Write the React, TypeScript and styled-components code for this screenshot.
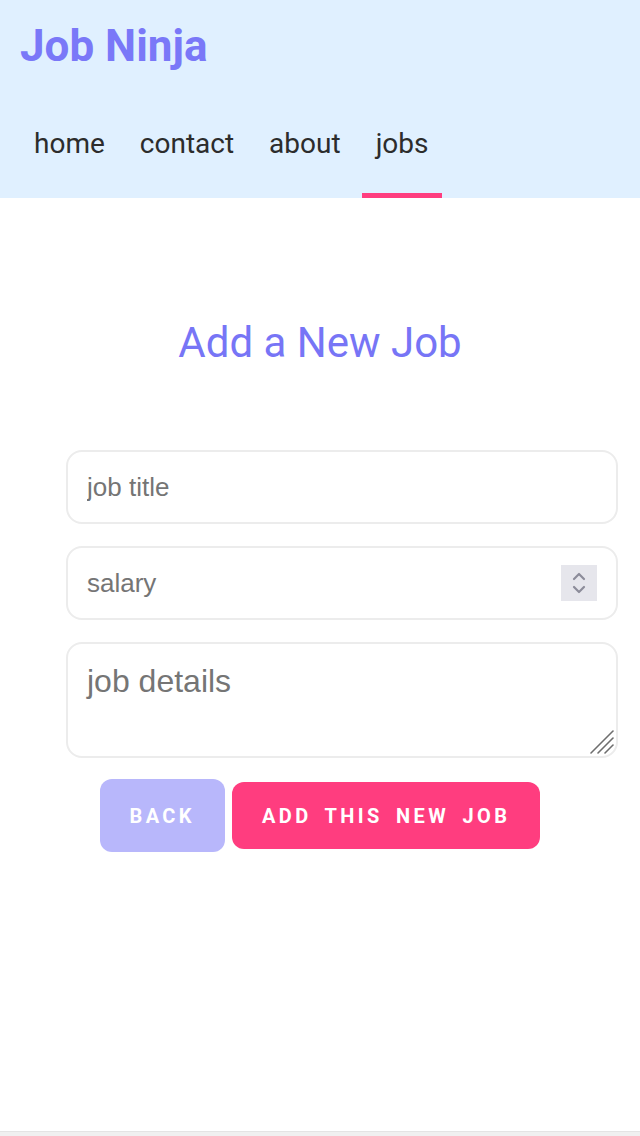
import React from 'react'
import styled, { createGlobalStyle } from 'styled-components'

const GlobalStyle = createGlobalStyle`
  html, body {
    margin: 0;
    padding: 0;
    background: #f0f0f0;
  }
  body {
    font-family: Roboto, "Liberation Sans", sans-serif;
  }
`

const Page = styled.div`
  min-height: 1131px;
  background: #ffffff;
  border-bottom: 1px solid #e4e4e4;
`

const Header = styled.header`
  background: #e0f0ff;
  padding: 20px 20px 0;
`

const Brand = styled.h1`
  margin: 0;
  font-size: 44px;
  line-height: 52px;
  font-weight: 700;
  color: #7a78f8;
`

const Nav = styled.nav`
  display: flex;
  gap: 7px;
`

const NavLink = styled.a<{ $active?: boolean }>`
  display: block;
  padding: 55px 14px 33px;
  font-size: 28px;
  line-height: 33px;
  color: #2c2c2c;
  text-decoration: none;
  border-bottom: 5px solid ${p => (p.$active ? '#ff3d7f' : 'transparent')};
  cursor: pointer;
`

const Main = styled.main`
  padding-top: 120px;
`

const Heading = styled.h2`
  margin: 0 0 82px;
  text-align: center;
  font-size: 42px;
  line-height: 50px;
  font-weight: 400;
  color: #7775f6;
`

const Form = styled.form`
  width: 552px;
  margin-left: 66px;
  display: flex;
  flex-direction: column;
  gap: 22px;
`

const FieldWrap = styled.div`
  position: relative;
`

const Field = styled.input`
  box-sizing: border-box;
  width: 100%;
  height: 74px;
  padding: 0 64px 0 19px;
  border: 2px solid #ececec;
  border-radius: 16px;
  outline: none;
  font-family: "Liberation Sans", Arial, sans-serif;
  font-size: 26px;
  color: #333;
  -moz-appearance: textfield;

  &::placeholder {
    color: #757575;
  }

  &::-webkit-inner-spin-button,
  &::-webkit-outer-spin-button {
    -webkit-appearance: none;
    margin: 0;
  }
`

const Spinner = styled.span`
  position: absolute;
  top: 19px;
  right: 21px;
  width: 36px;
  height: 36px;
  background: #e6e6ec;
  display: flex;
  align-items: center;
  justify-content: center;
  pointer-events: none;
`

const Details = styled.textarea`
  display: block;
  box-sizing: border-box;
  width: 100%;
  height: 116px;
  padding: 19px;
  border: 2px solid #ececec;
  border-radius: 16px;
  outline: none;
  resize: none;
  font-family: "Liberation Sans", Arial, sans-serif;
  font-size: 32px;
  color: #333;

  &::placeholder {
    color: #757575;
  }
`

const Grip = styled.svg`
  position: absolute;
  right: 3px;
  bottom: 3px;
  pointer-events: none;
`

const Actions = styled.div`
  display: flex;
  justify-content: center;
  align-items: center;
  gap: 7px;
  margin-top: 21px;
`

const Button = styled.button<{ $tone: 'back' | 'add' }>`
  border: none;
  border-radius: 12px;
  padding: 0 30px;
  height: ${p => (p.$tone === 'back' ? '73px' : '67px')};
  background: ${p => (p.$tone === 'back' ? '#b8b7fb' : '#ff3d7f')};
  color: #ffffff;
  font-family: Roboto, "Liberation Sans", sans-serif;
  font-size: 20px;
  font-weight: 700;
  letter-spacing: 3.4px;
  word-spacing: 5px;
  cursor: pointer;
`

const App: React.FC = () => {
  return (
    <>
      <GlobalStyle />
      <Page>
        <Header>
          <Brand>Job Ninja</Brand>
          <Nav>
            <NavLink>home</NavLink>
            <NavLink>contact</NavLink>
            <NavLink>about</NavLink>
            <NavLink $active>jobs</NavLink>
          </Nav>
        </Header>
        <Main>
          <Heading>Add a New Job</Heading>
          <Form onSubmit={e => e.preventDefault()}>
            <Field type="text" placeholder="job title" />
            <FieldWrap>
              <Field type="number" placeholder="salary" />
              <Spinner>
                <svg width="20" height="26" viewBox="0 0 20 26" fill="none" stroke="#8c8c9a" strokeWidth="2.2" strokeLinecap="round" strokeLinejoin="round">
                  <path d="M5 9 L10 4 L15 9" />
                  <path d="M5 17 L10 22 L15 17" />
                </svg>
              </Spinner>
            </FieldWrap>
            <FieldWrap>
              <Details placeholder="job details" />
              <Grip width="26" height="26" viewBox="0 0 26 26" stroke="#6e6e6e" strokeWidth="1.6" strokeLinecap="round">
                <line x1="2" y1="24" x2="24" y2="2" />
                <line x1="9" y1="24" x2="24" y2="9" />
                <line x1="16" y1="24" x2="24" y2="16" />
              </Grip>
            </FieldWrap>
          </Form>
          <Actions>
            <Button $tone="back" type="button">BACK</Button>
            <Button $tone="add" type="button">ADD THIS NEW JOB</Button>
          </Actions>
        </Main>
      </Page>
    </>
  )
}

export default App
